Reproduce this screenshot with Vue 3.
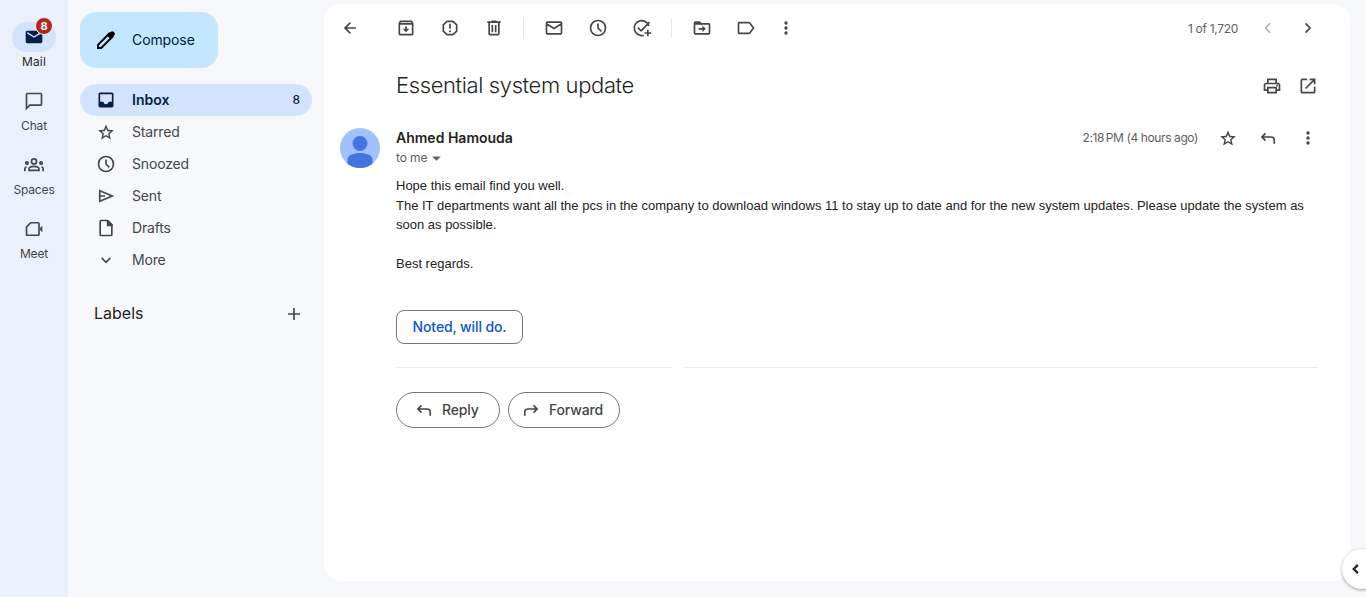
<script setup>
import { h } from 'vue'

// Every glyph is drawn on a 24-unit grid: f = filled shape, s = stroked outline, box = custom view box.
const glyphs = {
  mail: { f: 'M4 4.500h16a2 2 0 0 1 2 2v11a2 2 0 0 1-2 2H4a2 2 0 0 1-2-2V6.500a2 2 0 0 1 2-2zM4 6v2l8 5 8-5V6l-8 5z' },
  chat: { s: 'M3 21V4q0-1 1-1H20q1 0 1 1V16q0 1-1 1H7z' },
  spaces: { s: 'M12 4.7a3 3 0 1 1 0 6 3 3 0 1 1 0-6zM6 18.5V17c0-2.2 2.8-3.3 6-3.3s6 1.1 6 3.3v1.5zM3.5 8.2a1.5 1.5 0 1 1 0 3 1.5 1.5 0 1 1 0-3zM20.5 8.2a1.5 1.5 0 1 1 0 3 1.5 1.5 0 1 1 0-3zM1 19.5v-3.2q0-1.5 2-1.8M23 19.5v-3.2q0-1.5-2-1.8' },
  meet: { s: 'M8 4.5H17q1 0 1 1V18.5q0 1-1 1H4q-1 0-1-1V9.5z', f: 'M18 12l4-4v8z' },
  pencil: { s: 'M4 20v-3.2L15.3 5.5l3.2 3.2L7.2 20zM14 7l3 3', f: 'M14.5 6.2l2.3-2.4c.8-.8 2-.8 2.8 0l.7.7c.8.8.8 2 0 2.8l-2.4 2.4z' },
  inbox: { f: 'M5 3h14a2 2 0 0 1 2 2v14a2 2 0 0 1-2 2H5a2 2 0 0 1-2-2V5a2 2 0 0 1 2-2zM5 5v9h4c0 1.7 1.3 3 3 3s3-1.3 3-3h4V5z' },
  star: { box: '-.7 -1.200 25.400 25.400', f: 'M22 9.24l-7.19-.62L12 2 9.19 8.63 2 9.24l5.46 4.73L5.82 21 12 17.27 18.18 21l-1.63-7.03L22 9.24zM12 15.2l-3.5 2.100.9-3.900-3-2.600 4-.4L12 6.600l1.600 3.800 4 .4-3 2.600.9 3.900z' },
  clock: { s: 'M12 3a9 9 0 1 1 0 18 9 9 0 1 1 0-18zM12 6.5V12l4 4' },
  sent: { s: 'M4.500 5.800v12.400L19.500 12zM5 12H11' },
  draft: { s: 'M6 3h8l5 5v12q0 1-1 1H6q-1 0-1-1V4q0-1 1-1z', f: 'M13 3h2l5 5v2h-7z' },
  down: { s: 'M6.8 9.5l5.2 5.2 5.2-5.2' },
  plus: { s: 'M12 4.8v14.4M4.8 12h14.4' },
  back: { s: 'M19 12H6.500M12.5 5.500L6 12l6.500 6.500' },
  archive: { s: 'M5.300 4h13.400L20 6.500V19q0 1-1 1H5q-1 0-1-1V6.500zM4 7h16', f: 'M11 10h2v3h3l-4 4-4-4h3z' },
  report: { s: 'M8.3 4h7.4L20 8.3v7.4L15.7 20H8.3L4 15.7V8.3z', f: 'M11 7h2v6h-2zM11 15h2v2h-2z' },
  trash: { s: 'M6.2 6v13q0 1 1 1h9.6q1 0 1-1V6M4 5h16M9 4h6M10 8.5v8.5M14 8.5v8.5' },
  envelope: { s: 'M4 5h16q1 0 1 1v12q0 1-1 1H4q-1 0-1-1V6q0-1 1-1zM3 7l9 5.5L21 7' },
  task: { s: 'M20.3 9.5A9 9 0 1 0 14 20.8M7 11.5l4 4L21 5M19 14v8M15 18h8' },
  move: { s: 'M3 6q0-1 1-1h5l2 2h9q1 0 1 1v10q0 1-1 1H4q-1 0-1-1zM8 13h7', f: 'M3 5h6l3 3H3zM12.5 9l4 4-4 4z' },
  label: { s: 'M4 5.500h11.5q.7 0 1.1.6L21 12l-4.4 5.900q-.4.6-1.1.6H4q-1 0-1-1v-11q0-1 1-1z' },
  dots: { f: 'M12 4a2 2 0 1 1 0 4 2 2 0 1 1 0-4zM12 10a2 2 0 1 1 0 4 2 2 0 1 1 0-4zM12 16a2 2 0 1 1 0 4 2 2 0 1 1 0-4z' },
  left: { s: 'M14.500 6.500L9 12l5.500 5.500' },
  right: { s: 'M9 6.500L14.500 12 9 17.500' },
  print: { s: 'M7 8V4h10v4M7 17H3v-6q0-2 2-2h14q2 0 2 2v6h-4M7 14h10v6H7z', f: 'M17 10.5h2v2h-2z' },
  open: { s: 'M11 4H5q-1 0-1 1v14q0 1 1 1h14q1 0 1-1v-6M14 4h6v6M20 4L9 15' },
  reply: { s: 'M9 6.500L4.700 10.800l4.300 4.300M4.700 10.800H15.500q4 0 4 4V19' },
  forward: { s: 'M15 6.500l4.300 4.300-4.300 4.300M19.300 10.800H8.500q-4 0-4 4V19' },
  caret: { f: 'M6 9h12l-6 6z' }
}

const Icon = (props) => {
  const g = glyphs[props.name]
  return h('svg', { width: props.size || 20, height: props.size || 20, viewBox: g.box || '0 0 24 24', 'aria-hidden': 'true' }, [
    g.s && h('path', { d: g.s, fill: 'none', stroke: 'currentColor', 'stroke-width': props.weight || 2 }),
    g.f && h('path', { d: g.f, fill: 'currentColor', 'fill-rule': 'evenodd' })
  ])
}
Icon.props = ['name', 'size', 'weight']

const apps = [
  { icon: 'mail', text: 'Mail', badge: 8 },
  { icon: 'chat', text: 'Chat' },
  { icon: 'spaces', text: 'Spaces' },
  { icon: 'meet', text: 'Meet' }
]
const folders = [
  { icon: 'inbox', text: 'Inbox', count: 8 },
  { icon: 'star', text: 'Starred' },
  { icon: 'clock', text: 'Snoozed' },
  { icon: 'sent', text: 'Sent' },
  { icon: 'draft', text: 'Drafts' },
  { icon: 'down', text: 'More' }
]
const tools = [
  ['archive', 'report', 'trash'],
  ['envelope', 'clock', 'task'],
  ['move', 'label']
]
</script>

<template>
  <div class="app">
    <nav class="rail">
      <div v-for="a in apps" :key="a.text" class="rail-item" :class="{ active: a.badge }">
        <div class="pill">
          <Icon :name="a.icon" />
          <span v-if="a.badge" class="badge">{{ a.badge }}</span>
        </div>
        <span class="rail-text">{{ a.text }}</span>
      </div>
    </nav>

    <aside class="side">
      <button class="compose"><Icon name="pencil" size="24" /><span>Compose</span></button>
      <div class="folders">
        <div v-for="f in folders" :key="f.text" class="folder" :class="{ selected: f.count }">
          <Icon :name="f.icon" />
          <span class="folder-text">{{ f.text }}</span>
          <span v-if="f.count" class="count">{{ f.count }}</span>
        </div>
      </div>
      <div class="labels"><span>Labels</span><Icon name="plus" size="20" /></div>
    </aside>

    <main class="card">
      <header class="toolbar">
        <Icon name="back" class="back" />
        <div v-for="(group, i) in tools" :key="i" class="group">
          <Icon v-for="t in group" :key="t" :name="t" />
        </div>
        <Icon name="dots" class="more" />
        <span class="pages">1 of 1,720</span>
        <Icon name="left" class="prev" />
        <Icon name="right" />
      </header>

      <div class="subject">
        <h1>Essential system update</h1>
        <Icon name="print" />
        <Icon name="open" />
      </div>

      <section class="message">
        <svg class="avatar" width="40" height="40" viewBox="0 0 40 40">
          <defs><clipPath id="face"><circle cx="20" cy="20" r="20" /></clipPath></defs>
          <g clip-path="url(#face)">
            <rect width="40" height="40" fill="#a0c3ff" />
            <circle cx="20" cy="15.500" r="7.500" fill="#4374e0" />
            <path d="M7.500 42V32c0-5 5.500-7 12.500-7s12.500 2 12.500 7v10z" fill="#4374e0" />
          </g>
        </svg>
        <div class="content">
          <div class="from">
            <strong>Ahmed Hamouda</strong>
            <span class="time">2:18&#8239;PM (4 hours ago)</span>
            <Icon name="star" />
            <Icon name="reply" />
            <Icon name="dots" />
          </div>
          <div class="to"><span>to me</span><Icon name="caret" size="17" /></div>
          <div class="body">
            <p>Hope this email find you well.</p>
            <p>The IT departments want all the pcs in the company to download windows 11 to stay up to date and for the new system updates. Please update the system as<br>soon as possible.</p>
            <p class="gap">Best regards.</p>
          </div>
          <button class="suggest"><span>Noted, will do.</span></button>
          <div class="rules"><i></i><i></i></div>
          <div class="actions">
            <button class="reply"><Icon name="reply" /><span>Reply</span></button>
            <button class="forward"><Icon name="forward" /><span>Forward</span></button>
          </div>
        </div>
      </section>
    </main>
    <button class="panel-toggle"><Icon name="left" weight="3" size="18" /></button>
  </div>
</template>

<style>
body { margin: 0; overflow: hidden; }
</style>

<style scoped>
* { box-sizing: border-box; }
.app { position: relative; display: flex; width: 1366px; height: 597px; overflow: hidden; background: #f6f8fc; color: #444746; font-family: Inter, Roboto, "Liberation Sans", sans-serif; font-size: 14px; }
svg { display: block; flex: none; }
button { font: inherit; color: inherit; border: 0; padding: 0; margin: 0; display: flex; align-items: center; }
.rail { width: 68px; background: #eaf1fb; padding-top: 22px; }
.rail-item { height: 64px; display: flex; flex-direction: column; align-items: center; }
.pill { position: relative; width: 44px; height: 30px; border-radius: 15px; display: flex; align-items: center; justify-content: center; }
.active .pill { background: #d3e3fd; color: #041e49; }
.badge { position: absolute; left: 23px; top: -5px; width: 18px; height: 18px; border: 1px solid #eaf1fb; border-radius: 50%; background: #b3261e; color: #fff; font-size: 11px; font-weight: 700; line-height: 16px; text-align: center; }
.rail-text { font-size: 12px; line-height: 16px; margin-top: 2px; letter-spacing: -.15px; }
.active .rail-text { color: #1f1f1f; letter-spacing: .1px; }
.side { width: 256px; padding: 12px 12px 0; }
.compose { width: 138px; height: 56px; padding-left: 14px; border-radius: 16px; background: #c2e7ff; color: #001d35; gap: 14px; }
.compose span { padding-bottom: 2px; letter-spacing: -.1px; }
.compose svg { color: #000; }
.folders { margin-top: 16px; }
.folder { display: flex; align-items: center; height: 32px; padding: 0 12px 0 16px; border-radius: 16px; }
.folder-text { flex: 1; margin-left: 16px; padding-bottom: 2px; letter-spacing: -.17px; }
.selected { background: #d3e3fd; color: #041e49; font-weight: 600; }
.selected .folder-text { letter-spacing: .05px; }
.count { font-size: 12px; font-weight: 500; padding-bottom: 1px; }
.labels { display: flex; justify-content: space-between; align-items: center; margin-top: 28px; padding: 0 8px 0 14px; height: 20px; font-size: 16px; color: #1f1f1f; }
.labels span { padding-bottom: 3px; }
.labels svg { color: #444746; }
.card { width: 1026px; height: 577px; margin-top: 4px; background: #fff; border-radius: 16px; }
.toolbar { height: 48px; display: flex; align-items: center; padding: 0 32px 0 16px; }
.back { margin-right: 36px; }
.group { display: flex; align-items: center; gap: 24px; height: 20px; padding-right: 19px; margin-right: 20px; border-right: 1px solid #e6e8ea; }
.group:nth-of-type(3) { border: 0; margin-right: 0; padding-right: 20px; }
.pages { margin-left: auto; margin-right: 20px; font-size: 12px; color: #5e5e5e; letter-spacing: -.3px; }
.prev { margin-right: 20px; color: #b4b5b5; }
.subject { display: flex; align-items: center; height: 60px; margin-top: 4px; padding: 0 32px 0 72px; gap: 16px; }
h1 { flex: 1; margin: 0; padding-bottom: 2px; font-size: 22px; font-weight: 300; line-height: 28px; color: #1f1f1f; letter-spacing: -.38px; }
.message { display: flex; padding: 12px 32px 0 16px; }
.content { width: 922px; margin-left: 16px; }
.from { height: 20px; display: flex; align-items: center; }
strong { flex: 1; padding-bottom: 2px; font-size: 14px; font-weight: 600; color: #1f1f1f; }
.time { padding-bottom: 2px; font-size: 12px; color: #5e5e5e; margin-right: 20px; letter-spacing: -.4px; }
.from svg + svg { margin-left: 20px; }
.to { display: flex; align-items: center; gap: 1px; height: 20px; font-size: 12px; color: #5e5e5e; letter-spacing: -.1px; }
.to span { padding-bottom: 2px; }
.body { margin-top: 8px; font-family: "Liberation Sans", Arial, sans-serif; font-size: 13px; line-height: 19.500px; color: #222; white-space: nowrap; }
p { margin: 0; }
.gap { margin-top: 19.500px; }
.suggest { margin-top: 36px; width: 127px; height: 34px; justify-content: center; border: 1px solid #747775; border-radius: 8px; background: #fff; color: #0b57d0; font-weight: 500; letter-spacing: -.12px; }
.rules { display: flex; gap: 12px; margin-top: 23px; }
.rules i { height: 1px; background: #eceded; width: 276px; }
.rules i + i { flex: 1; }
.actions { display: flex; gap: 8px; margin-top: 24px; }
.actions button { height: 36px; border: 1px solid #747775; border-radius: 18px; background: #fff; font-weight: 500; letter-spacing: -.17px; }
.actions .reply { width: 104px; padding-left: 17px; gap: 8px; }
.actions .forward { width: 112px; padding-left: 12px; gap: 8px; }
.panel-toggle { position: absolute; left: 1342px; top: 549px; width: 40px; height: 40px; border-radius: 50%; background: #fff; color: #1f1f1f; padding-left: 5px; box-shadow: 0 1px 3px rgba(60, 64, 67, .5); }
</style>
